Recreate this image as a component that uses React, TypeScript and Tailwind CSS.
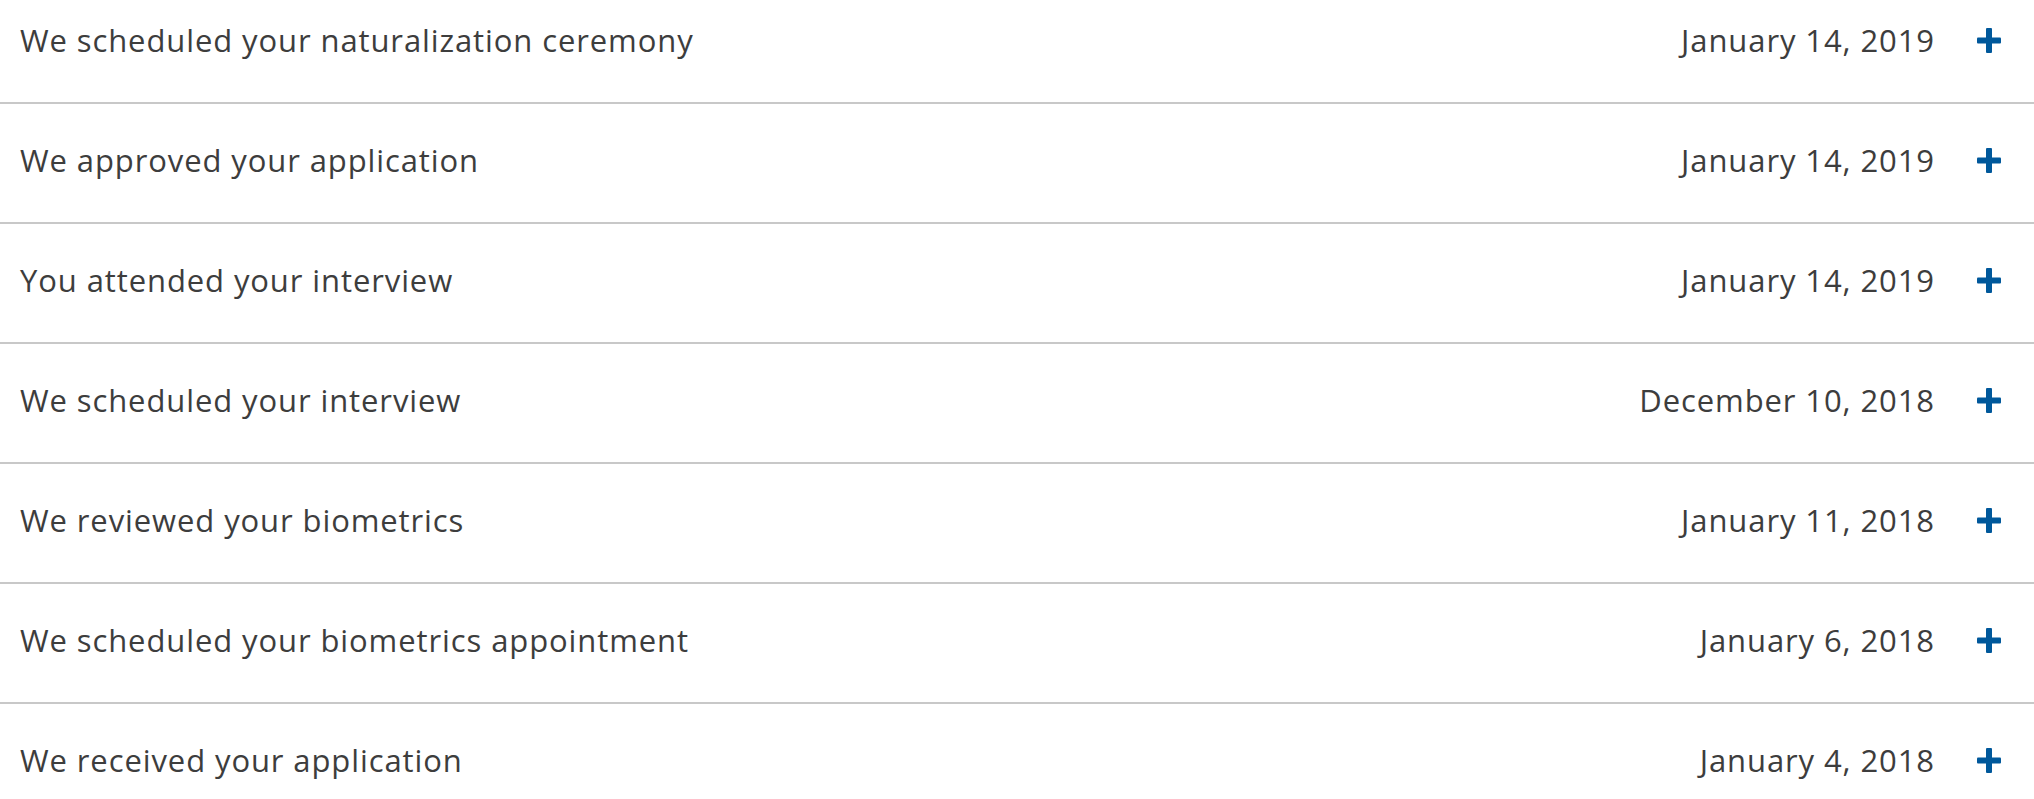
import React from 'react';

type Event = { title: string; date: string };

const events: Event[] = [
  { title: 'We scheduled your naturalization ceremony', date: 'January 14, 2019' },
  { title: 'We approved your application', date: 'January 14, 2019' },
  { title: 'You attended your interview', date: 'January 14, 2019' },
  { title: 'We scheduled your interview', date: 'December 10, 2018' },
  { title: 'We reviewed your biometrics', date: 'January 11, 2018' },
  { title: 'We scheduled your biometrics appointment', date: 'January 6, 2018' },
  { title: 'We received your application', date: 'January 4, 2018' },
];

const PlusIcon: React.FC = () => (
  <svg width="24" height="25" viewBox="0 0 24 25" aria-hidden="true">
    <rect x="9" y="0" width="6" height="25" rx="1" fill="#00589b" />
    <rect x="0" y="9.5" width="24" height="6" rx="1" fill="#00589b" />
  </svg>
);

const EventRow: React.FC<{ event: Event }> = ({ event }) => (
  <div className="flex h-[120px] items-center border-b-2 border-[#c8c8c8] pb-[6px] pl-5 pr-[33px]">
    <span className="flex-1 text-[#3d3d3d]">{event.title}</span>
    <span className="text-[#3d3d3d]">{event.date}</span>
    <button className="ml-[42px] flex items-center" aria-label="Expand">
      <PlusIcon />
    </button>
  </div>
);

const App: React.FC = () => {
  return (
    <div className="h-[799px] w-full overflow-hidden bg-white">
      <div
        className="-mt-[16px] text-[31px] leading-none tracking-[0.9px]"
        style={{ fontFamily: '"Open Sans", Lato, sans-serif' }}
      >
        {events.map((e) => (
          <EventRow key={e.title} event={e} />
        ))}
      </div>
    </div>
  );
};

export default App;
